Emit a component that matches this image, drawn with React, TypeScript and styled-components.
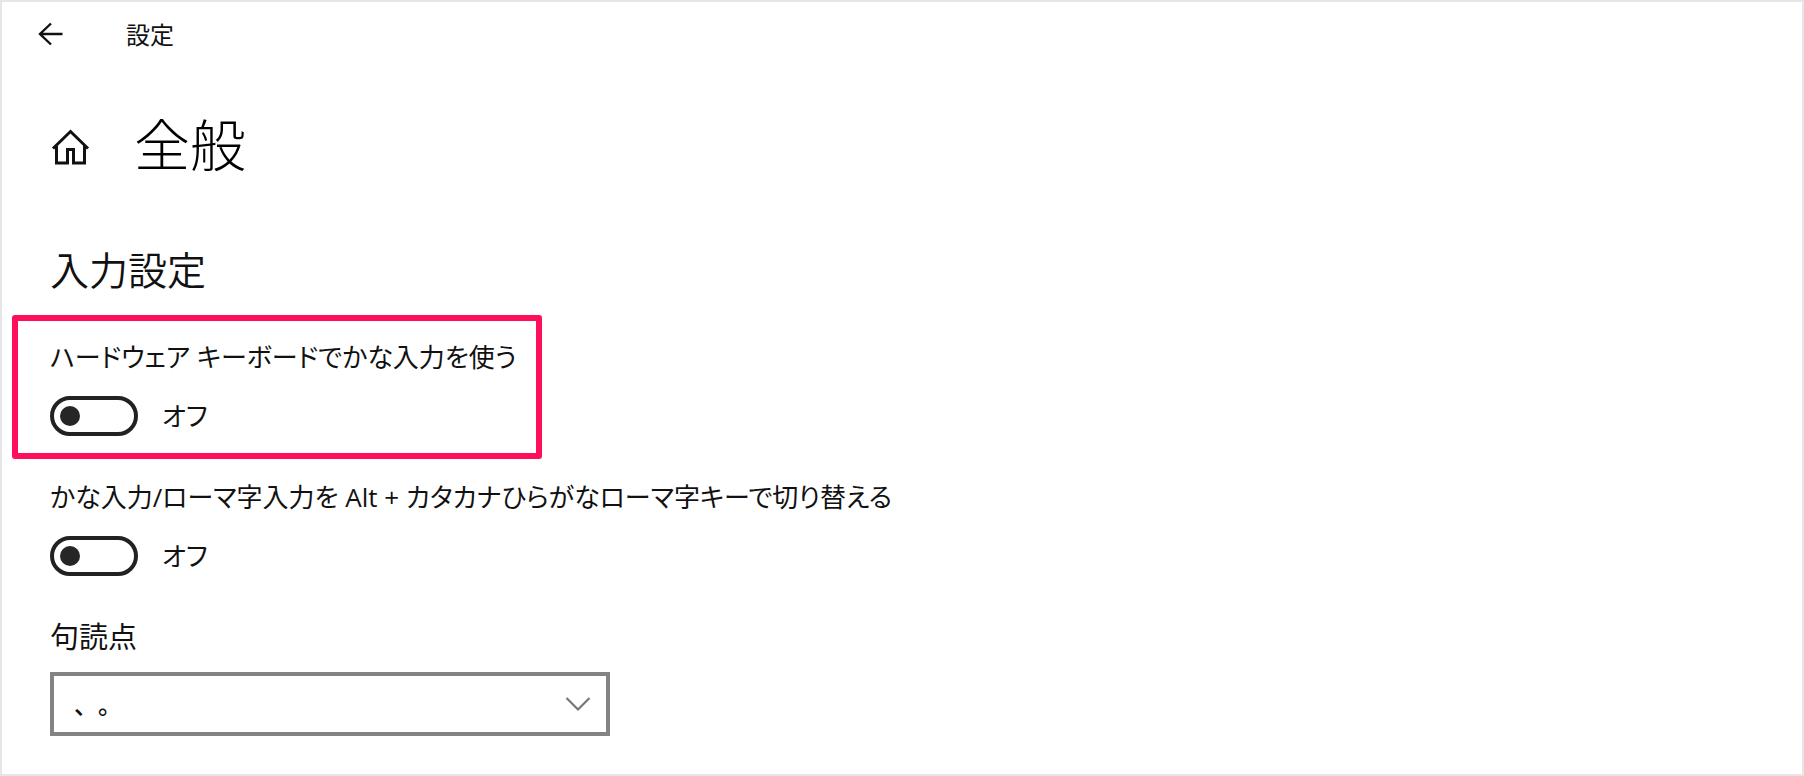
import React, { useId, useState } from 'react';
import styled, { createGlobalStyle } from 'styled-components';

const GlobalStyle = createGlobalStyle`
  *, *::before, *::after { box-sizing: border-box; }
  body {
    margin: 0;
    background: #fff;
    color: #111;
    font-family: 'Open Sans', 'Noto Sans CJK JP', sans-serif;
    font-feature-settings: 'palt';
  }
`;

const Window = styled.div`
  min-height: 100vh;
  padding: 14px 48px 36px;
  border: 2px solid #e6e6e6;
`;

const TitleBar = styled.header`
  display: flex;
  align-items: center;
  gap: 62px;
  height: 36px;
  margin-left: -16px;
`;

const BackButton = styled.button`
  display: flex;
  padding: 0;
  border: 0;
  background: none;
  color: inherit;
`;

const AppName = styled.span`
  padding-top: 2px;
  font-size: 24px;
  line-height: 36px;
`;

const PageHeader = styled.div`
  display: flex;
  align-items: center;
  gap: 44px;
  margin-top: 52px;
`;

const HomeLink = styled.a`
  display: flex;
  padding-top: 6px;
  color: inherit;
`;

const PageTitle = styled.h1`
  margin: 0;
  color: #000;
  font-size: 56px;
  line-height: 80px;
  font-weight: 300;
`;

const SectionTitle = styled.h2`
  margin: 58px 0 0;
  font-size: 39px;
  line-height: 56px;
  font-weight: 350;
`;

const Fields = styled.div`
  display: flex;
  flex-direction: column;
  gap: 43px;
  margin-top: 41px;
`;

const Field = styled.div<{ $gap: number }>`
  position: relative;
  display: flex;
  flex-direction: column;
  align-items: flex-start;
  gap: ${({ $gap }) => $gap}px;
`;

const Highlight = styled.div`
  position: absolute;
  top: -24px;
  bottom: -23px;
  left: -38px;
  width: 530px;
  border: 6px solid #ff0f5b;
  border-radius: 3px;
  pointer-events: none;
`;

const FieldLabel = styled.label<{ $size?: number }>`
  font-size: ${({ $size = 26 }) => $size}px;
  line-height: 36px;
`;

const SwitchRow = styled.div`
  display: flex;
  align-items: center;
  gap: 24px;
`;

const Switch = styled.input`
  appearance: none;
  display: flex;
  align-items: center;
  width: 88px;
  height: 40px;
  margin: 0;
  padding: 0 6px;
  border: 4px solid #222;
  border-radius: 20px;
  background: #fff;

  &::before {
    content: '';
    width: 20px;
    height: 20px;
    border-radius: 50%;
    background: #262626;
  }

  &:checked {
    justify-content: flex-end;
  }
`;

const SwitchState = styled.span`
  font-size: 26px;
  line-height: 36px;
`;

const SelectBox = styled.div`
  display: grid;
  align-items: center;
  width: 100%;
  max-width: 560px;

  & > * { grid-area: 1 / 1; }
`;

const Select = styled.select`
  appearance: none;
  width: 100%;
  height: 64px;
  padding: 0 60px 0 20px;
  border: 4px solid #838383;
  border-radius: 0;
  background: #fff;
  color: inherit;
  font: inherit;
  font-size: 24px;
  font-weight: 500;
  font-feature-settings: normal;
  text-spacing-trim: space-all;
`;

const Chevron = styled.svg`
  justify-self: end;
  margin-right: 18px;
  pointer-events: none;
`;

function ToggleField({ label, highlighted = false }: { label: string; highlighted?: boolean }) {
  const id = useId();
  const [on, setOn] = useState(false);
  return (
    <Field $gap={21}>
      {highlighted && <Highlight />}
      <FieldLabel htmlFor={id}>{label}</FieldLabel>
      <SwitchRow>
        <Switch
          id={id}
          type="checkbox"
          role="switch"
          checked={on}
          onChange={(e) => setOn(e.target.checked)}
        />
        <SwitchState>{on ? 'オン' : 'オフ'}</SwitchState>
      </SwitchRow>
    </Field>
  );
}

export default function App() {
  return (
    <Window lang="ja">
      <GlobalStyle />
      <TitleBar>
        <BackButton type="button" aria-label="戻る">
          <svg width="30" height="24" viewBox="0 0 30 24" fill="none" stroke="currentColor" strokeWidth="2.4">
            <path d="M28.500 12H5.500M17 1.500L6 12l11 10.500" />
          </svg>
        </BackButton>
        <AppName>設定</AppName>
      </TitleBar>

      <main>
        <PageHeader>
          <HomeLink href="#home" aria-label="ホーム">
            <svg width="40" height="36" viewBox="0 0 40 36" fill="none" stroke="currentColor" strokeWidth="3">
              <path d="M3 19.500L20.500 2.500L38 19.500" />
              <path d="M6.500 17v17h11V20.500h6V34h11V17" />
            </svg>
          </HomeLink>
          <PageTitle>全般</PageTitle>
        </PageHeader>

        <SectionTitle>入力設定</SectionTitle>
        <Fields>
          <ToggleField label="ハードウェア キーボードでかな入力を使う" highlighted />
          <ToggleField label="かな入力/ローマ字入力を Alt + カタカナひらがなローマ字キーで切り替える" />
          <Field $gap={17}>
            <FieldLabel htmlFor="punctuation" $size={29}>句読点</FieldLabel>
            <SelectBox>
              <Select id="punctuation" defaultValue="ja">
                <option value="ja">、。</option>
                <option value="latin">,.</option>
              </Select>
              <Chevron width="28" height="16" viewBox="0 0 28 16" fill="none" stroke="#777" strokeWidth="2.200">
                <path d="M2.500 2L14 13.500L25.500 2" />
              </Chevron>
            </SelectBox>
          </Field>
        </Fields>
      </main>
    </Window>
  );
}
